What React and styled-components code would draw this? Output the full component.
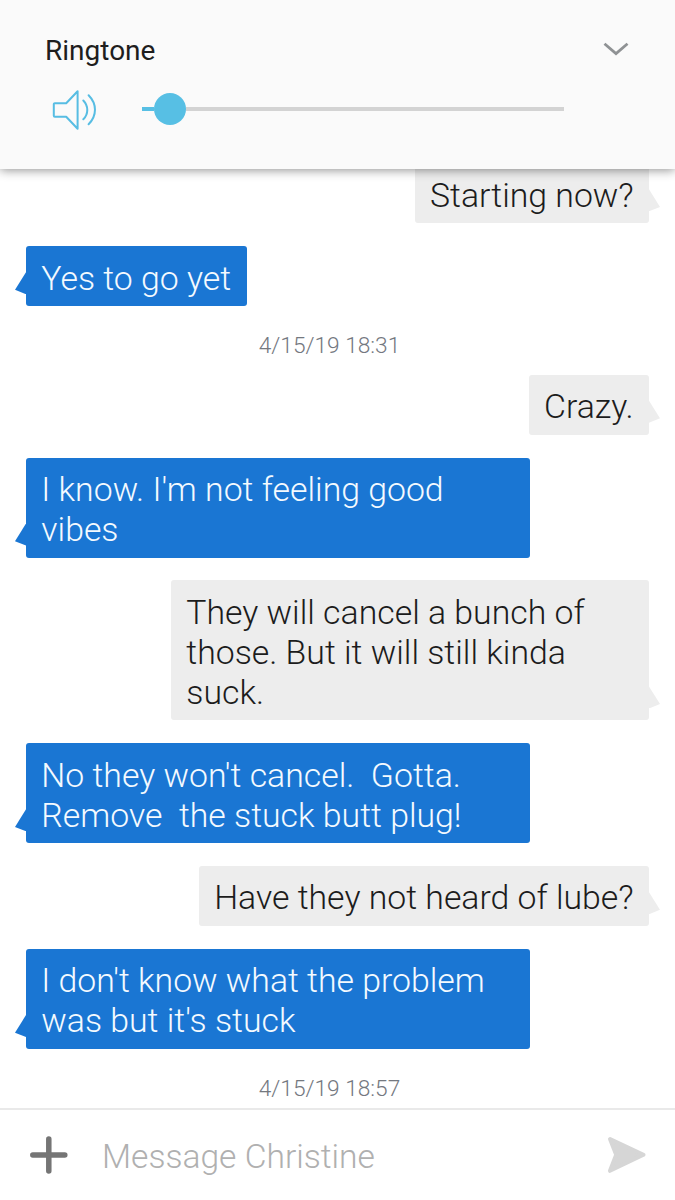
import styled, { createGlobalStyle, css } from "styled-components";

const messages = [
  { id: 1, type: "sent", text: "Starting now?" },
  { id: 2, type: "received", text: "Yes to go yet" },
  { id: 3, type: "time", text: "4/15/19 18:31" },
  { id: 4, type: "sent", text: "Crazy." },
  { id: 5, type: "received", text: "I know. I'm not feeling good vibes" },
  {
    id: 6,
    type: "sent",
    text: "They will cancel a bunch of those. But it will still kinda suck.",
  },
  {
    id: 7,
    type: "received",
    text: "No they won't cancel.  Gotta. Remove  the stuck butt plug!",
  },
  { id: 8, type: "sent", text: "Have they not heard of lube?" },
  {
    id: 9,
    type: "received",
    text: "I don't know what the problem was but it's stuck",
  },
  { id: 10, type: "time", text: "4/15/19 18:57" },
];

const App = () => {
  return (
    <Page>
      <GlobalStyle />
      <VolumePanel>
        <PanelHeader>
          <PanelTitle>Ringtone</PanelTitle>
          <ChevronIcon viewBox="0 0 26 14">
            <path d="M1.5 1.8 13 11.6 24.5 1.8" />
          </ChevronIcon>
        </PanelHeader>
        <VolumeRow>
          <SpeakerIcon viewBox="0 0 46 42">
            <path d="M2.8 15.2h11.4L25.6 3.2v37.6L14.2 28.7H2.8a1 1 0 0 1-1-1V16.2a1 1 0 0 1 1-1Z" />
            <path d="M31.3 12.5c5.3 5.4 5.3 13.4 0 18.8" />
            <path d="M36.6 7.2c8.5 8.6 8.5 20.5 0 29.1" />
          </SpeakerIcon>
          <Slider>
            <SliderFill />
            <SliderThumb />
            <SliderRest />
          </Slider>
        </VolumeRow>
      </VolumePanel>
      <Conversation>
        {messages.map((message) =>
          message.type === "time" ? (
            <Timestamp key={message.id}>{message.text}</Timestamp>
          ) : (
            <Bubble key={message.id} $sent={message.type === "sent"}>
              {message.text}
            </Bubble>
          )
        )}
      </Conversation>
      <Composer>
        <PlusIcon viewBox="0 0 38 38">
          <path d="M18.8 3v32M2.8 19h32" />
        </PlusIcon>
        <MessageInput placeholder="Message Christine" />
        <SendIcon viewBox="0 0 40 38">
          <path d="M3 3 36.5 18.8 3 34.8 9.2 18.8Z" />
        </SendIcon>
      </Composer>
    </Page>
  );
};

export default App;

const GlobalStyle = createGlobalStyle`
  * {
    box-sizing: border-box;
  }

  body {
    margin: 0;
    font-family: Roboto, sans-serif;
    background-color: #fff;
  }
`;

const Page = styled.div`
  width: 675px;
  height: 1200px;
  display: flex;
  flex-direction: column;
  overflow: hidden;
`;

const VolumePanel = styled.header`
  height: 169px;
  flex-shrink: 0;
  padding: 34px 46px 0 45px;
  background-color: #fafafa;
  box-shadow: 0 1px 10px rgba(0, 0, 0, 0.45);
  z-index: 1;
`;

const PanelHeader = styled.div`
  height: 34px;
  display: flex;
  justify-content: space-between;
  align-items: center;
`;

const PanelTitle = styled.h1`
  margin: 0;
  font-size: 28px;
  font-weight: 400;
  line-height: 34px;
  color: #1e1e1e;
`;

const ChevronIcon = styled.svg`
  width: 26px;
  height: 14px;
  margin-bottom: 4px;
  fill: none;
  stroke: #8f9294;
  stroke-width: 2.8;
`;

const VolumeRow = styled.div`
  height: 42px;
  margin-top: 20px;
  padding-left: 7.4px;
  display: flex;
  align-items: center;
`;

const SpeakerIcon = styled.svg`
  width: 46px;
  height: 42px;
  margin-right: 44px;
  fill: none;
  stroke: #57bde3;
  stroke-width: 2;
  stroke-linejoin: round;
  stroke-linecap: round;
`;

const Slider = styled.div`
  width: 422px;
  display: flex;
  align-items: center;
`;

const SliderFill = styled.div`
  width: 12px;
  height: 4px;
  background-color: #57bfe4;
`;

const SliderThumb = styled.div`
  width: 32px;
  height: 32px;
  border-radius: 50%;
  background-color: #57bfe4;
`;

const SliderRest = styled.div`
  flex: 1;
  height: 4px;
  background-color: #d3d3d3;
`;

const Conversation = styled.main`
  height: 939px;
  padding: 0 26px 13.4px;
  display: flex;
  flex-direction: column;
  justify-content: flex-end;
  gap: 22.9px;
  overflow: hidden;
`;

const sentStyle = css`
  align-self: flex-end;
  max-width: 478px;
  color: #1c1c1c;
  background-color: #ededed;

  &::after {
    left: 100%;
    clip-path: polygon(0 0, 100% 80%, 0 100%);
  }
`;

const receivedStyle = css`
  align-self: flex-start;
  max-width: 504px;
  color: #f4faff;
  background-color: #1a76d3;

  &::after {
    right: 100%;
    clip-path: polygon(100% 0, 0 80%, 100% 100%);
  }
`;

const Bubble = styled.div`
  position: relative;
  flex-shrink: 0;
  padding: 12.3px 15.3px 7.7px;
  border-radius: 3px;
  font-size: 33.8px;
  font-weight: 300;
  line-height: 40px;
  white-space: pre-wrap;

  &::after {
    content: "";
    position: absolute;
    bottom: 12px;
    width: 11px;
    height: 22px;
    background-color: inherit;
  }

  ${({ $sent }) => ($sent ? sentStyle : receivedStyle)}
`;

const Timestamp = styled.time`
  height: 22.7px;
  flex-shrink: 0;
  padding: 4.7px 16px 0 0;
  font-size: 22.7px;
  font-weight: 300;
  line-height: 23px;
  text-align: center;
  color: #74787f;
`;

const Composer = styled.footer`
  flex: 1;
  padding: 0 28.5px 0 30px;
  display: flex;
  align-items: center;
  border-top: 2px solid #e9e9e9;
  background-color: #fff;
`;

const PlusIcon = styled.svg`
  width: 38px;
  height: 38px;
  stroke: #757575;
  stroke-width: 5.5;
  stroke-linecap: round;
`;

const MessageInput = styled.input`
  flex: 1;
  min-width: 0;
  margin: 0 20px 0 34px;
  padding: 2px 0 0;
  border: none;
  outline: none;
  font-family: inherit;
  font-size: 33.6px;
  font-weight: 300;
  background: none;

  &::placeholder {
    color: #b0b0b0;
    opacity: 1;
  }
`;

const SendIcon = styled.svg`
  width: 40px;
  height: 38px;
  fill: #d6d6d6;
  stroke: #d6d6d6;
  stroke-width: 4;
  stroke-linejoin: round;
`;
